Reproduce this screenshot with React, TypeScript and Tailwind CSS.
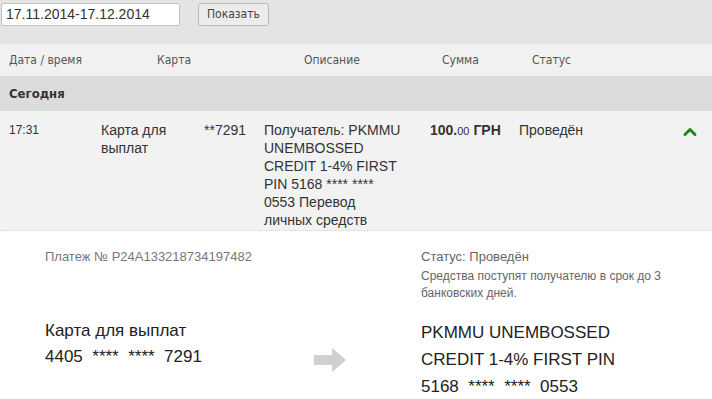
import React from 'react';
import { ChevronUp } from 'lucide-react';

const descriptionLines = [
  'Получатель: PKMMU',
  'UNEMBOSSED',
  'CREDIT 1-4% FIRST',
  'PIN 5168 **** ****',
  '0553 Перевод',
  'личных средств',
];

export default function App() {
  return (
    <div className="w-[712px] h-[399px] overflow-hidden bg-[#e4e4e4] font-['Liberation_Sans',Arial,sans-serif] text-[#333]">
      {/* Period filter */}
      <div className="flex items-center h-[44px] pb-[16px] pl-[1px]">
        <input
          readOnly
          value="17.11.2014-17.12.2014"
          className="w-[179px] h-[23px] bg-white border border-[#c4c4c4] rounded-[2px] px-[4px] text-[14px] text-[#333] outline-none"
        />
        <button className="ml-[18px] h-[23px] px-[8px] bg-[#ececec] border border-[#b9b9b9] rounded-[3px] text-[12px] text-[#444] font-['DejaVu_Sans_Condensed',sans-serif]">
          Показать
        </button>
      </div>

      {/* Table header */}
      <div className="flex items-center h-[32px] bg-[#f1f1f1] text-[12px] text-[#555] font-['DejaVu_Sans_Condensed',sans-serif]">
        <div className="w-[157px] pl-[9px]">Дата / время</div>
        <div className="w-[147px]">Карта</div>
        <div className="w-[138px]">Описание</div>
        <div className="w-[90px]">Сумма</div>
        <div>Статус</div>
      </div>

      {/* Group */}
      <div className="flex items-center h-[35px] bg-[#dcdcdc] pl-[9px] text-[13px] font-bold text-[#333] font-['DejaVu_Sans_Condensed',sans-serif]">
        Сегодня
      </div>

      {/* Transaction row */}
      <div className="flex h-[120px] bg-[#f2f2f2] border-b border-dotted border-[#d6d6d6] pt-[10px] text-[14px] leading-[18px] text-[#333]">
        <div className="w-[101px] pl-[9px] text-[12px]">17:31</div>
        <div className="w-[103px]">Карта для<br />выплат</div>
        <div className="w-[60px]">**7291</div>
        <div className="w-[166px] whitespace-nowrap">
          {descriptionLines.map((line) => (
            <div key={line}>{line}</div>
          ))}
        </div>
        <div className="w-[89px] font-bold">
          100.<span className="text-[11px] font-normal">00</span> ГРН
        </div>
        <div className="flex-1">Проведён</div>
        <div className="w-[32px] pt-[1px]">
          <ChevronUp className="w-[20px] h-[20px] text-[#1a8a1a]" strokeWidth={3.5} />
        </div>
      </div>

      {/* Details */}
      <div className="bg-white h-[170px] flex pt-[16px]">
        <div className="w-[269px] pl-[45px] flex flex-col">
          <div className="text-[13px] text-[#777]">Платеж № P24A133218734197482</div>
          <div className="mt-[51px] text-[17px] leading-[26px] text-[#222]">
            <div>Карта для выплат</div>
            <div className="whitespace-pre">4405  ****  ****  7291</div>
          </div>
          <div className="mt-[24px] text-[13px] text-[#777]">Мир Акции 2</div>
        </div>
        <div className="w-[152px] pt-[101px] pl-[45px]">
          <svg width="34" height="24" viewBox="0 0 34 24">
            <polygon points="0,7 18,7 18,0 32,12 18,24 18,17 0,17" fill="#cfcfcf" />
          </svg>
        </div>
        <div className="flex-1 flex flex-col">
          <div className="text-[13px] text-[#666]">Статус: Проведён</div>
          <div className="mt-[1px] text-[12px] leading-[17px] text-[#666] w-[260px]">
            Средства поступят получателю в срок до 3 банковских дней.
          </div>
          <div className="mt-[17px] text-[17px] leading-[27px] text-[#222]">
            <div>PKMMU UNEMBOSSED</div>
            <div>CREDIT 1-4% FIRST PIN</div>
            <div className="whitespace-pre">5168  ****  ****  0553</div>
          </div>
        </div>
      </div>
    </div>
  );
}
